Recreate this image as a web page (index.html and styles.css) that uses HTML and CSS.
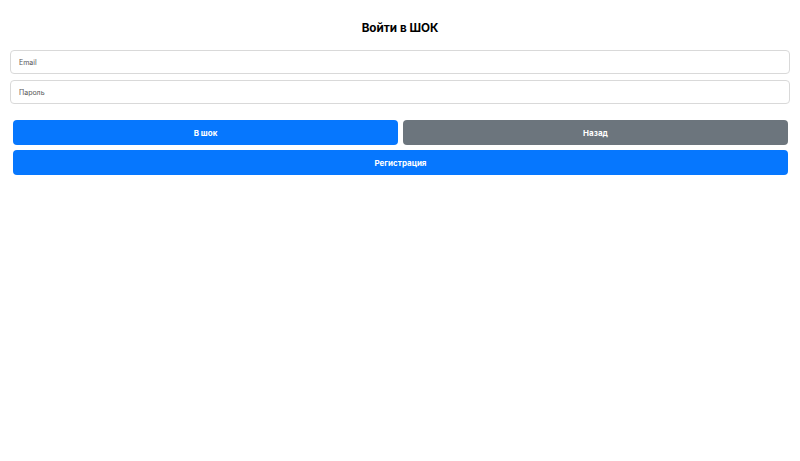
FILE: index.html
```html
<!DOCTYPE html>
<html lang="ru">
<head>
<meta charset="utf-8">
<link rel="stylesheet" href="styles.css">
</head>
<body>
<div class="page">
  <h1 class="title">Войти в ШОК</h1>
  <form class="form">
    <input class="field" type="email" placeholder="Email">
    <input class="field" type="password" placeholder="Пароль">
    <div class="actions">
      <div class="row">
        <button type="button" class="btn btn-primary">В шок</button>
        <button type="button" class="btn btn-secondary">Назад</button>
      </div>
      <button type="button" class="btn btn-primary btn-wide">Регистрация</button>
    </div>
  </form>
</div>
</body>
</html>
```
FILE: styles.css
```css
html, body {
  margin: 0;
  padding: 0;
  background: #fff;
  font-family: Inter, "Liberation Sans", sans-serif;
}
.page {
  padding: 10px;
}
.title {
  margin: 10px 0 14px;
  text-align: center;
  font-size: 11.7px;
  font-weight: 700;
  color: #000;
  line-height: 16px;
}
.form {
  display: flex;
  flex-direction: column;
  gap: 6px;
}
.field {
  box-sizing: border-box;
  height: 24px;
  width: 100%;
  border: 1px solid #d9d9d9;
  border-radius: 4px;
  padding: 0 8px;
  font-family: inherit;
  font-size: 7px;
  color: #333;
  outline: none;
}
.field::placeholder {
  color: #555;
}
.actions {
  display: flex;
  flex-direction: column;
  gap: 5px;
  padding: 10px 2px 0 3px;
}
.row {
  display: flex;
  gap: 5px;
}
.btn {
  flex: 1;
  height: 25px;
  border: none;
  border-radius: 4px;
  color: #fff;
  font-family: inherit;
  font-size: 8px;
  font-weight: 700;
  cursor: pointer;
}
.btn-primary {
  background: #0677fe;
}
.btn-secondary {
  background: #6c757d;
}
.btn-wide {
  flex: none;
  width: 100%;
}
```
